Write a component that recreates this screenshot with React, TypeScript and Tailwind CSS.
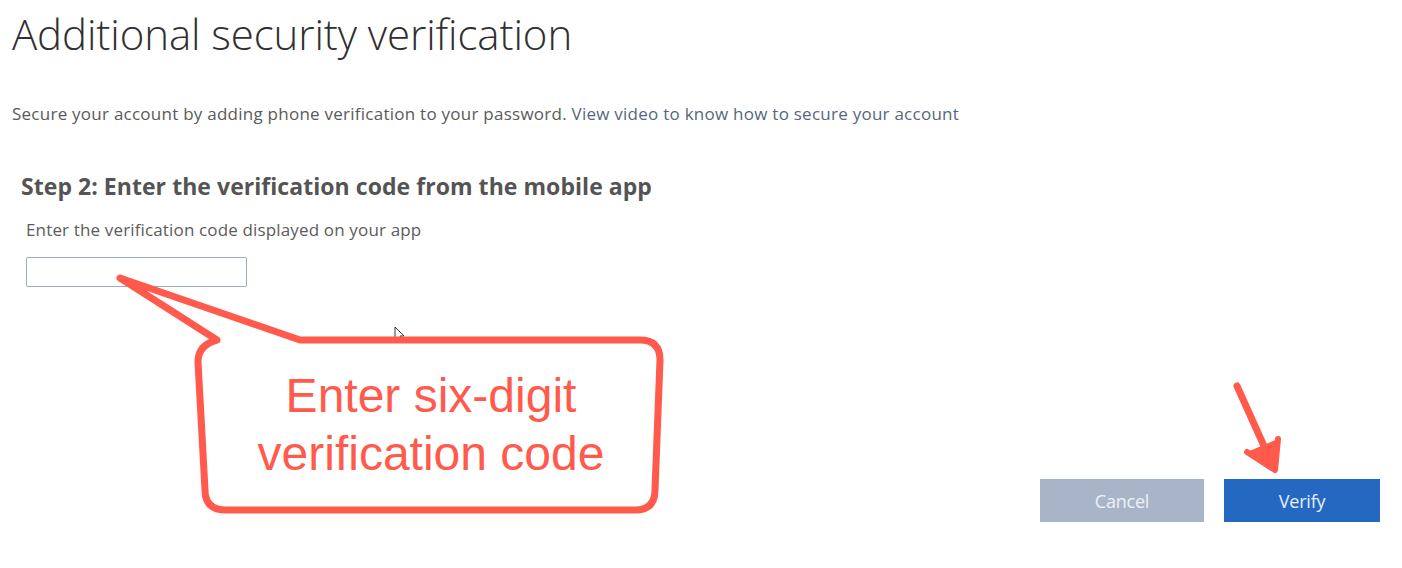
import React from "react";

export default function App() {
  const red = "#ff5a4c";
  return (
    <div className="relative w-[1402px] h-[568px] overflow-hidden bg-white" style={{ fontFamily: '"Open Sans", "Noto Sans", sans-serif' }}>
      <div className="pl-[12px] pt-[8px]">
        <h1 className="text-[42px] leading-[52px] font-light text-[#303030] tracking-[-0.1px]">Additional security verification</h1>
        <p className="mt-[42px] text-[17px] leading-[24px] text-[#5a5a5a] tracking-[0.25px]">
          Secure your account by adding phone verification to your password. <span className="text-[#55677e]">View video to know how to secure your account</span>
        </p>
      </div>
      <div className="pl-[21px] mt-[46px]">
        <h2 className="text-[23px] leading-[28px] font-bold text-[#545454] tracking-[0.05px]">Step 2: Enter the verification code from the mobile app</h2>
        <div className="pl-[5px]">
          <p className="mt-[20px] text-[17px] leading-[20px] text-[#5c5c5c] tracking-[0.15px]">Enter the verification code displayed on your app</p>
          <input type="text" className="mt-[17px] block w-[221px] h-[30px] rounded-[2px] border border-[#98acc6] bg-white outline-none" />
        </div>
      </div>
      <div className="flex justify-end gap-[20px] pr-[22px] mt-[192px]">
        <button className="w-[164px] h-[43px] bg-[#a8b5c8] text-[#eef1f6] text-[18px] leading-[44px] tracking-[-0.2px]">Cancel</button>
        <button className="w-[156px] h-[43px] bg-[#2468c2] text-[#e6efff] text-[18px] leading-[44px] tracking-[-0.2px]">Verify</button>
      </div>

      {/* mouse cursor */}
      <svg className="absolute left-[394px] top-[326px]" width="12" height="18" viewBox="0 0 12 18">
        <path d="M1 1 L1 14 L4 11 L6.5 16 L8.5 15 L6 10 L10 10 Z" fill="#fff" stroke="#333" strokeWidth="1" />
      </svg>

      {/* callout */}
      <svg className="absolute left-0 top-0 pointer-events-none" width="1402" height="568" viewBox="0 0 1402 568">
        <path
          d="M300 340 L640 340 Q660 340 660 360 L655 490 Q655 510 635 510 L226 510 Q205 510 205 490 L198 362 Q198 345 217 340 L120 278 Z"
          fill="none"
          stroke={red}
          strokeWidth="7"
          strokeLinejoin="round"
          strokeLinecap="round"
        />
        <path d="M1237 386 L1273 466" stroke={red} strokeWidth="7" strokeLinecap="round" />
        <path d="M1247 452 L1275 470 L1278 439" fill={red} stroke={red} strokeWidth="6" strokeLinejoin="round" strokeLinecap="round" />
      </svg>
      <div
        className="absolute left-[205px] top-[344px] w-[452px] h-[162px] flex flex-col items-center justify-center text-center text-[48px] leading-[58px] text-[#ff5a4c]"
        style={{ fontFamily: '"Liberation Sans", Arial, sans-serif' }}
      >
        <div>Enter six-digit</div>
        <div>verification code</div>
      </div>
    </div>
  );
}
